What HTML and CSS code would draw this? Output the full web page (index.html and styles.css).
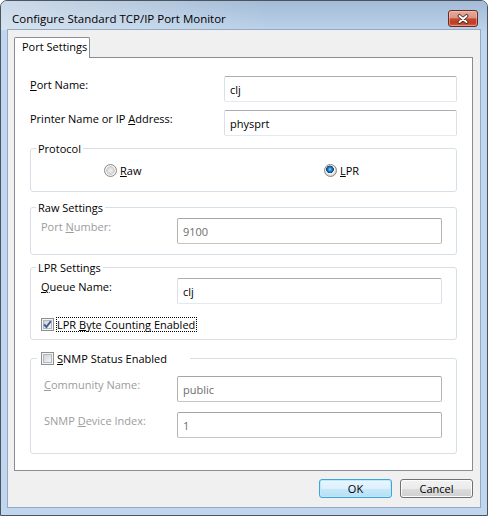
FILE: index.html
```html
<!DOCTYPE html>
<html>
<head>
<meta charset="utf-8">
<title>Configure Standard TCP/IP Port Monitor</title>
<link rel="stylesheet" href="styles.css">
</head>
<body>
<div class="window">
  <div class="titlebar">
    <span class="title">Configure Standard TCP/IP Port Monitor</span>
    <button class="close" aria-label="Close">
      <svg width="14" height="10" viewBox="0 0 14 10">
        <path d="M3.5 2 L10.5 8 M10.5 2 L3.5 8" stroke="#3b2420" stroke-width="3.6" stroke-linecap="round" fill="none"/>
        <path d="M3.5 2 L10.5 8 M10.5 2 L3.5 8" stroke="#ffffff" stroke-width="2" stroke-linecap="round" fill="none"/>
      </svg>
    </button>
  </div>
  <div class="client">
    <div class="tabs"><div class="tab">Port Settings</div></div>
    <div class="panel">
      <div class="row-top">
        <label class="lbl"><u>P</u>ort Name:</label>
        <input class="field" type="text" value="clj">
      </div>
      <div class="row-top">
        <label class="lbl">Printer Name or IP <u>A</u>ddress:</label>
        <input class="field" type="text" value="physprt">
      </div>

      <div class="group group-protocol">
        <div class="legend">Protocol</div>
        <div class="radios">
          <div class="opt opt-raw"><span class="radio"></span><span><u>R</u>aw</span></div>
          <div class="opt"><span class="radio on"></span><span><u>L</u>PR</span></div>
        </div>
      </div>

      <div class="group group-raw">
        <div class="legend">Raw Settings</div>
        <div class="grow">
          <label class="lbl off">Port <u>N</u>umber:</label>
          <input class="field" type="text" value="9100" disabled>
        </div>
      </div>

      <div class="group group-lpr">
        <div class="legend">LPR Settings</div>
        <div class="grow">
          <label class="lbl"><u>Q</u>ueue Name:</label>
          <input class="field" type="text" value="clj">
        </div>
        <div class="check-row">
          <svg class="cb" width="13" height="13" viewBox="0 0 13 13">
            <defs>
              <linearGradient id="cbg1" x1="0" y1="0" x2="1" y2="1">
                <stop offset="0" stop-color="#cbcfd5"/>
                <stop offset="1" stop-color="#f7f7f7"/>
              </linearGradient>
            </defs>
            <rect x="0.5" y="0.5" width="12" height="12" fill="#f4f4f4" stroke="#8e8f8f"/>
            <rect x="2.5" y="2.5" width="8" height="8" fill="url(#cbg1)" stroke="#b4b7bd"/>
            <path d="M3.2 6.4 L5.4 9 L9.8 3.2" stroke="#3d5a96" stroke-width="1.9" fill="none"/>
          </svg>
          <span class="focus">LPR <u>B</u>yte Counting Enabled</span>
        </div>
      </div>

      <div class="group group-snmp">
        <div class="snmp-head">
          <svg class="cb" width="13" height="13" viewBox="0 0 13 13">
            <defs>
              <linearGradient id="cbg2" x1="0" y1="0" x2="1" y2="1">
                <stop offset="0" stop-color="#cbcfd5"/>
                <stop offset="1" stop-color="#f7f7f7"/>
              </linearGradient>
            </defs>
            <rect x="0.5" y="0.5" width="12" height="12" fill="#f4f4f4" stroke="#8e8f8f"/>
            <rect x="2.5" y="2.5" width="8" height="8" fill="url(#cbg2)" stroke="#b4b7bd"/>
          </svg>
          <span><u>S</u>NMP Status Enabled</span>
        </div>
        <div class="grow grow-snmp first">
          <label class="lbl off"><u>C</u>ommunity Name:</label>
          <input class="field" type="text" value="public" disabled>
        </div>
        <div class="grow grow-snmp">
          <label class="lbl off">SNMP <u>D</u>evice Index:</label>
          <input class="field" type="text" value="1" disabled>
        </div>
      </div>
    </div>
    <div class="buttons">
      <button class="btn btn-default">OK</button>
      <button class="btn">Cancel</button>
    </div>
  </div>
</div>
</body>
</html>
```
FILE: styles.css
```css
* { box-sizing: border-box; }

html, body {
  margin: 0;
  padding: 0;
  background: #ffffff;
}

body {
  font-family: "Open Sans", "Noto Sans", sans-serif;
  font-size: 11px;
  color: #000;
}

.window {
  width: 488px;
  height: 516px;
  border: 1px solid #4b5561;
  border-radius: 7px 7px 0 0;
  background: #bfd6ee;
  display: flex;
  flex-direction: column;
  overflow: hidden;
}

.titlebar {
  height: 29px;
  flex: none;
  display: flex;
  align-items: flex-start;
  padding: 10px 0 0 11px;
  background:
    linear-gradient(to right, rgba(232, 237, 243, 0.6), rgba(232, 237, 243, 0) 55%),
    linear-gradient(#a3bbd6, #bbd2ea);
}

.title {
  font-size: 11.5px;
  line-height: 15px;
  color: #000;
}

.close {
  margin: -1px 9px 0 auto;
  width: 30px;
  height: 17px;
  padding: 0;
  border: 1px solid #6a2c20;
  border-radius: 3px;
  background: linear-gradient(#e7ab9c 0%, #dc9482 46%, #c64a31 52%, #bf3c22 80%, #d46a4e 100%);
  box-shadow: inset 0 0 0 1px rgba(255, 210, 200, 0.45);
  display: flex;
  align-items: center;
  justify-content: center;
}

.client {
  margin: 0 7px 8px 7px;
  height: 477px;
  flex: none;
  background: #f0f0f0;
  box-shadow: 0 0 0 1px #94aac3;
  padding: 7px 7px 9px 6px;
  display: flex;
  flex-direction: column;
}

.tabs {
  display: flex;
  height: 20px;
}

.tab {
  width: 76px;
  height: 21px;
  border: 1px solid #898c95;
  border-bottom: none;
  border-radius: 2px 2px 0 0;
  background: #fff;
  padding: 1px 0 0 7px;
  line-height: 15px;
  position: relative;
  z-index: 1;
}

.panel {
  height: 414px;
  border: 1px solid #898c95;
  background: #fff;
  padding: 18px 15px 16px 15px;
}

.row-top {
  display: grid;
  grid-template-columns: 194px 233px;
  height: 26px;
  margin-bottom: 8px;
}

.row-top + .row-top { margin-bottom: 0; }

.lbl {
  line-height: 15px;
  padding-top: 1px;
}

.lbl.off { color: #9c9c9c; }

.field {
  height: 26px;
  width: 100%;
  margin: 0;
  padding: 0 5px;
  font: inherit;
  color: #000;
  background: #fff;
  border: 1px solid;
  border-color: #abadb3 #dbdfe6 #e3e9ef #dbdfe6;
  border-radius: 2px;
  outline: none;
}

.field:disabled {
  color: #6d6d6d;
  background: #fff;
  border-color: #a5a5a5 #b3b3b3 #c4c4c4 #b3b3b3;
}

.group {
  border: 1px solid #d5dfe5;
  border-radius: 3px;
}

.legend {
  margin: -8px 0 0 5px;
  padding: 0 2px;
  width: fit-content;
  background: #fff;
  line-height: 15px;
}

.group-protocol { margin-top: 12px; padding-bottom: 13px; }
.group-raw { margin-top: 15px; padding-bottom: 10px; }
.group-lpr { margin-top: 12px; padding-bottom: 7px; }
.group-snmp { margin-top: 18px; padding-bottom: 15px; }

.radios {
  display: flex;
  margin-top: 7px;
  padding-left: 73px;
  height: 15px;
  line-height: 15px;
}

.opt {
  display: flex;
  align-items: center;
  gap: 3px;
}

.opt-raw { width: 220px; }

.radio {
  width: 13px;
  height: 13px;
  border-radius: 50%;
  border: 1px solid #8a8a8a;
  background: radial-gradient(circle at 50% 50%, #f2f2f2 0, #dedede 2.5px, #cdcdcd 4px, #f7f7f7 4.6px, #ededed 5.5px);
}

.radio.on {
  border-color: #858585;
  background: radial-gradient(circle at 45% 40%, #a9e2fd 0, #3795d6 1.4px, #1a5f9f 2.8px, #0e3f72 3.6px, #f8f8f8 4.1px, #f3f3f3 4.7px, #dadada 5.5px);
}

.grow {
  display: grid;
  grid-template-columns: 136px 265px;
  padding-left: 10px;
  margin-top: 3px;
  height: 26px;
}

.grow-snmp {
  grid-template-columns: 133px 265px;
  padding-left: 13px;
  margin-top: 10px;
}

.check-row {
  display: flex;
  align-items: center;
  gap: 2px;
  height: 15px;
  margin-top: 13px;
  padding-left: 10px;
}

.cb { display: block; flex: none; }

.focus {
  border: 1px dotted #000;
  line-height: 13px;
  padding: 0 1px 0 0;
}

.snmp-head {
  display: flex;
  align-items: center;
  gap: 3px;
  margin: -8px 0 0 6px;
  padding-left: 4px;
  width: 153px;
  height: 15px;
  line-height: 15px;
  background: #fff;
}

.buttons {
  display: flex;
  justify-content: flex-end;
  gap: 8px;
  margin-top: 8px;
}

.btn {
  width: 73px;
  height: 19px;
  padding: 0;
  font: inherit;
  color: #000;
  border: 1px solid #707070;
  border-radius: 3px;
  background: linear-gradient(#f2f2f2 0%, #ebebeb 50%, #dddddd 50%, #cfcfcf 100%);
  box-shadow: inset 0 0 0 1px #fcfcfc;
}

.btn-default {
  border-color: #3ba5dc;
  background: linear-gradient(#eaf6fd 0%, #dbf1fc 50%, #c6e8f9 50%, #b6e0f6 100%);
  box-shadow: inset 0 0 0 1px #bfe9fb;
}
```
